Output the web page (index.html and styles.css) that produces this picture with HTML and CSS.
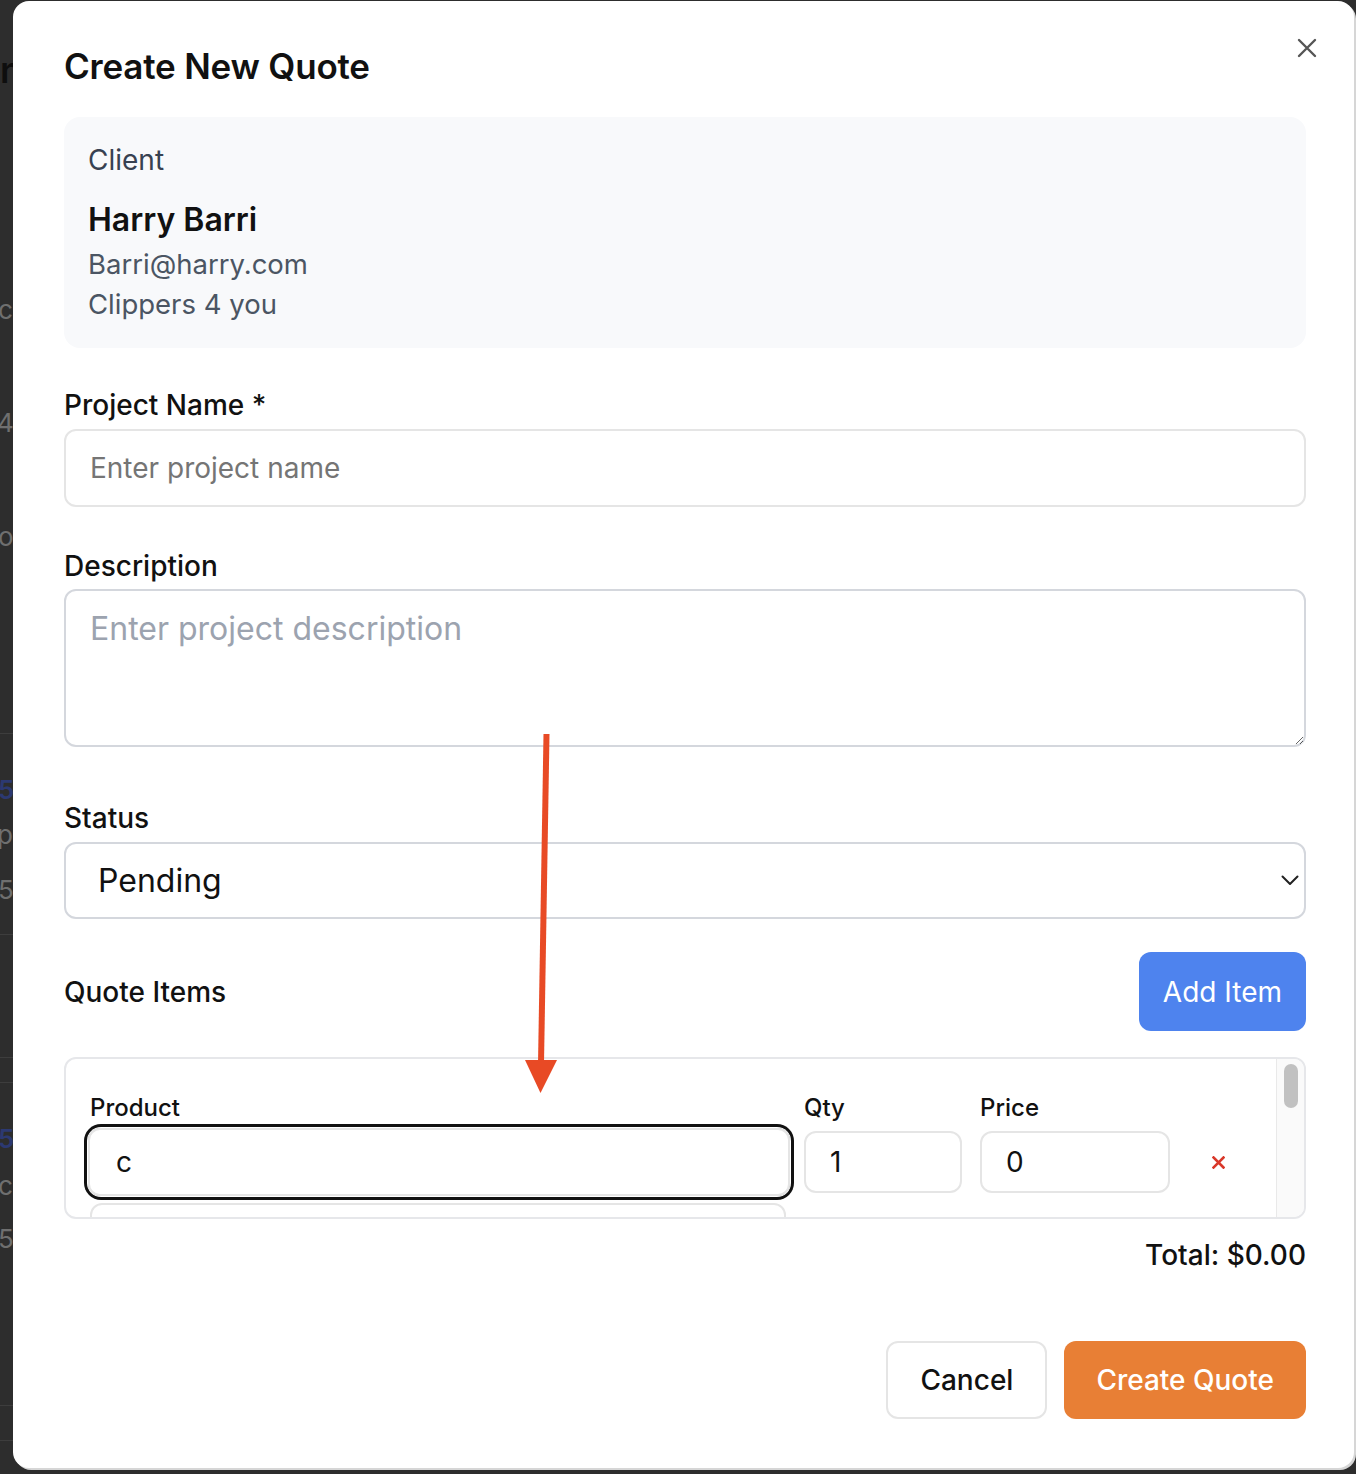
FILE: index.html
```html
<!DOCTYPE html>
<html lang="en">
<head>
<meta charset="utf-8">
<title>Create New Quote</title>
<link rel="stylesheet" href="styles.css">
</head>
<body>
<div class="bg-page">
  <div class="bg-frag bg-n">n</div>
  <div class="bg-frag bg-c">c</div>
  <div class="bg-frag bg-4">4</div>
  <div class="bg-frag bg-o">o</div>
  <div class="bg-rule bg-r1"></div>
  <div class="bg-frag bg-blue bg-5a">5</div>
  <div class="bg-frag bg-p">p</div>
  <div class="bg-frag bg-5b">5</div>
  <div class="bg-rule bg-r2"></div>
  <div class="bg-rule bg-r3"></div>
  <div class="bg-rule bg-r4"></div>
  <div class="bg-frag bg-blue bg-5c">5</div>
  <div class="bg-frag bg-cl">cl</div>
  <div class="bg-frag bg-5d">5</div>
  <div class="bg-rule bg-r5"></div>
  <div class="bg-rule bg-r6"></div>
</div>

<div class="modal">
  <button class="close-btn" aria-label="Close">
    <svg width="20" height="20" viewBox="0 0 20 20"><path d="M2 2 L18 18 M18 2 L2 18" stroke="#555" stroke-width="2.4" stroke-linecap="round" fill="none"/></svg>
  </button>
  <h2 class="title">Create New Quote</h2>

  <section class="client-card">
    <div class="client-label">Client</div>
    <div class="client-name">Harry Barri</div>
    <div class="client-meta">Barri@harry.com</div>
    <div class="client-meta">Clippers 4 you</div>
  </section>

  <div class="field field-project">
    <label class="label">Project Name *</label>
    <input class="text-input" type="text" placeholder="Enter project name">
  </div>

  <div class="field field-desc">
    <label class="label label-desc">Description</label>
    <textarea class="textarea" placeholder="Enter project description"></textarea>
  </div>

  <div class="field field-status">
    <label class="label label-status">Status</label>
    <div class="select-wrap">
      <select class="select"><option>Pending</option></select>
      <svg class="chevron" width="18" height="11" viewBox="0 0 18 11"><path d="M1.5 1.5 L9 9 L16.5 1.5" stroke="#222" stroke-width="2" fill="none" stroke-linecap="round" stroke-linejoin="round"/></svg>
    </div>
  </div>

  <div class="items-head">
    <span class="items-title">Quote Items</span>
    <button class="btn btn-add">Add Item</button>
  </div>

  <div class="items-box">
    <div class="items-scroll">
      <div class="item-grid">
        <label class="item-label col-p label-product">Product</label>
        <label class="item-label col-q">Qty</label>
        <label class="item-label col-pr">Price</label>

        <div class="combo col-p"><input class="cell-input product-input" type="text" value="c"></div>
        <input class="cell-input qty-input col-q" type="text" value="1">
        <input class="cell-input price-input col-pr" type="text" value="0">
        <button class="remove-btn col-x" aria-label="Remove">
          <svg width="13" height="13" viewBox="0 0 13 13"><path d="M1.5 1.5 L11.5 11.5 M11.5 1.5 L1.5 11.5" stroke="#d9382a" stroke-width="2.6" stroke-linecap="square" fill="none"/></svg>
        </button>

        <ul class="suggest col-p">
          <li class="suggest-item">Clipper Blade Set</li>
          <li class="suggest-item">Classic Cut</li>
          <li class="suggest-item">Color Treatment</li>
        </ul>
      </div>
    </div>
    <div class="scrollbar"><div class="scroll-thumb"></div></div>
  </div>

  <div class="total">Total: $0.00</div>

  <div class="actions">
    <button class="btn btn-cancel">Cancel</button>
    <button class="btn btn-create">Create Quote</button>
  </div>
</div>

<svg class="annotation" width="1356" height="1474" viewBox="0 0 1356 1474">
  <path d="M546.5 734 L541 1064" stroke="#e84a25" stroke-width="6" fill="none"/>
  <polygon points="525,1060 557,1060 540.5,1093" fill="#e84a25"/>
</svg>
</body>
</html>
```

FILE: styles.css
```css
html, body {
  margin: 0;
  padding: 0;
}

body {
  width: 1356px;
  height: 1474px;
  overflow: hidden;
  position: relative;
  background: #2d2d2d;
  font-family: Inter, "Noto Sans", "Liberation Sans", sans-serif;
  color: #111;
}

/* ---------- background page (dimmed behind the modal) ---------- */
.bg-page {
  display: flex;
  flex-direction: column;
  width: 60px;
}

.bg-frag {
  font-size: 26px;
  line-height: 30px;
  height: 30px;
  color: #6f6f6f;
  white-space: nowrap;
}

.bg-blue { color: #2c3972; font-weight: 600; }

.bg-n { margin-top: 50px; font-size: 36px; line-height: 40px; height: 40px; font-weight: 600; color: #0e0e0e; }
.bg-c { margin-top: 205px; margin-left: -2px; }
.bg-4 { margin-top: 83px; margin-left: -3px; }
.bg-o { margin-top: 84px; margin-left: -2px; }
.bg-rule { height: 1px; background: #3d3d3d; }
.bg-r1 { margin-top: 181px; }
.bg-5a { margin-top: 41px; margin-left: -2px; }
.bg-p { margin-top: 15px; margin-left: -3px; }
.bg-5b { margin-top: 25px; margin-left: -2px; }
.bg-r2 { margin-top: 29px; }
.bg-r3 { margin-top: 122px; }
.bg-r4 { margin-top: 24px; }
.bg-5c { margin-top: 41px; margin-left: -2px; }
.bg-cl { margin-top: 17px; margin-left: -2px; }
.bg-5d { margin-top: 23px; margin-left: -2px; }
.bg-r5 { margin-top: 151px; }
.bg-r6 { margin-top: 34px; }

/* ---------- modal ---------- */
.modal {
  position: absolute;
  left: 13px;
  top: 1px;
  width: 1341px;
  height: 1467px;
  box-sizing: border-box;
  background: #fff;
  border-radius: 16px;
  padding: 43px 48px 0 51px;
  box-shadow: 2px 2px 0 #d6d6d6;
}

.close-btn {
  position: absolute;
  top: 37px;
  right: 37px;
  width: 20px;
  height: 20px;
  padding: 0;
  border: 0;
  background: transparent;
  display: flex;
}

.title {
  margin: 0;
  font-size: 35px;
  line-height: 44px;
  font-weight: 600;
  color: #111;
  letter-spacing: -0.2px;
}

.client-card {
  margin-top: 29px;
  background: #f8f9fb;
  border-radius: 16px;
  padding: 25px 24px 24px;
}

.client-label {
  font-size: 28px;
  line-height: 36px;
  color: #374151;
  margin-bottom: 22px;
}

.client-name {
  font-size: 32px;
  line-height: 40px;
  font-weight: 600;
  color: #111;
  margin-bottom: 4px;
}

.client-meta {
  font-size: 27.5px;
  line-height: 40px;
  color: #4b5563;
}

/* ---------- fields ---------- */
.field { display: flex; flex-direction: column; }
.field-project { margin-top: 39px; }
.field-desc { margin-top: 41px; }
.field-status { margin-top: 53px; }

.label {
  font-size: 28px;
  line-height: 36px;
  font-weight: 500;
  color: #111;
  margin-bottom: 6px;
}
.label-desc { margin-bottom: 5px; }

.text-input {
  box-sizing: border-box;
  height: 78px;
  width: 100%;
  border: 2px solid #e5e5e5;
  border-radius: 12px;
  padding: 0 24px;
  font-family: inherit;
  font-size: 28px;
  color: #111;
  background: #fff;
  outline: none;
}
.text-input::placeholder { color: #757575; }

.textarea {
  display: block;
  box-sizing: border-box;
  height: 158px;
  width: 100%;
  border: 2px solid #d4d7dd;
  border-radius: 12px;
  padding: 18px 24px;
  font-family: inherit;
  font-size: 32px;
  line-height: 40px;
  color: #111;
  background: #fff;
  outline: none;
  margin: 0;
}
.textarea::placeholder { color: #9ca3af; }

.select-wrap { position: relative; }

.select {
  display: block;
  box-sizing: border-box;
  width: 100%;
  height: 77px;
  appearance: none;
  -webkit-appearance: none;
  border: 2px solid #d4d7dd;
  border-radius: 12px;
  background: #fff;
  padding: 0 32px;
  font-family: inherit;
  font-size: 32px;
  color: #111;
  outline: none;
}

.chevron {
  position: absolute;
  right: 7px;
  top: 33px;
  pointer-events: none;
}

/* ---------- quote items ---------- */
.items-head {
  margin-top: 33px;
  display: flex;
  align-items: center;
  justify-content: space-between;
}

.items-title {
  font-size: 28px;
  line-height: 36px;
  font-weight: 500;
}

.btn {
  font-family: inherit;
  border-radius: 12px;
  border: 0;
  cursor: pointer;
}

.btn-add {
  height: 79px;
  padding: 0 24px;
  background: #4e83ee;
  color: #fff;
  font-size: 28px;
}

.items-box {
  margin-top: 26px;
  height: 162px;
  box-sizing: border-box;
  border: 2px solid #e6e7ea;
  border-radius: 12px;
  overflow: hidden;
  display: flex;
}

.items-scroll {
  flex: 1;
  height: 158px;
  overflow: hidden;
  box-sizing: border-box;
  padding: 34px 0 0 22px;
}

.scrollbar {
  width: 28px;
  height: 158px;
  box-sizing: border-box;
  background: #fafafa;
  border-left: 1px solid #e9e9e9;
  padding: 5px 0 0 7px;
}

.scroll-thumb {
  width: 14px;
  height: 44px;
  border-radius: 7px;
  background: #c1c1c1;
}

.item-grid {
  display: grid;
  grid-template-columns: 702px 14px 158px 18px 190px 1fr;
  row-gap: 5px;
  align-items: center;
}

.col-p { grid-column: 1; }
.col-q { grid-column: 3; }
.col-pr { grid-column: 5; }
.col-x { grid-column: 6; }

.item-label {
  font-size: 24px;
  line-height: 30px;
  font-weight: 500;
  color: #111;
}
.label-product { padding-left: 2px; }

.combo {
  border-radius: 13px;
  box-shadow: 0 0 0 1px #fff, 0 0 0 4px #111;
}

.cell-input {
  display: block;
  box-sizing: border-box;
  width: 100%;
  border: 2px solid #e5e5e5;
  border-radius: 12px;
  background: #fff;
  font-family: inherit;
  font-size: 28px;
  color: #111;
  outline: none;
  margin: 0;
}

.product-input { height: 68px; padding: 0 26px; }
.qty-input, .price-input { height: 62px; padding: 0 24px; }

.remove-btn {
  justify-self: start;
  margin-left: 42px;
  width: 13px;
  height: 13px;
  padding: 0;
  border: 0;
  background: transparent;
  display: flex;
}

.suggest {
  list-style: none;
  margin: 2px 4px 0 2px;
  padding: 0;
  border: 2px solid #e5e5e5;
  border-radius: 12px;
  background: #fff;
}

.suggest-item {
  height: 88px;
  line-height: 88px;
  padding: 0 24px;
  font-size: 26px;
  color: #111;
}

/* ---------- footer ---------- */
.total {
  margin-top: 18px;
  text-align: right;
  font-size: 28px;
  line-height: 36px;
  font-weight: 500;
}

.actions {
  margin-top: 68px;
  display: flex;
  justify-content: flex-end;
  gap: 17px;
}

.btn-cancel {
  height: 78px;
  padding: 0 32px;
  background: #fff;
  border: 2px solid #e5e5e5;
  color: #111;
  font-size: 28px;
  font-weight: 500;
}

.btn-create {
  height: 78px;
  padding: 0 32px;
  background: #e87f35;
  color: #fff;
  font-size: 28px;
  font-weight: 500;
}

/* ---------- annotation overlay ---------- */
.annotation {
  position: absolute;
  left: 0;
  top: 0;
  pointer-events: none;
}
```
